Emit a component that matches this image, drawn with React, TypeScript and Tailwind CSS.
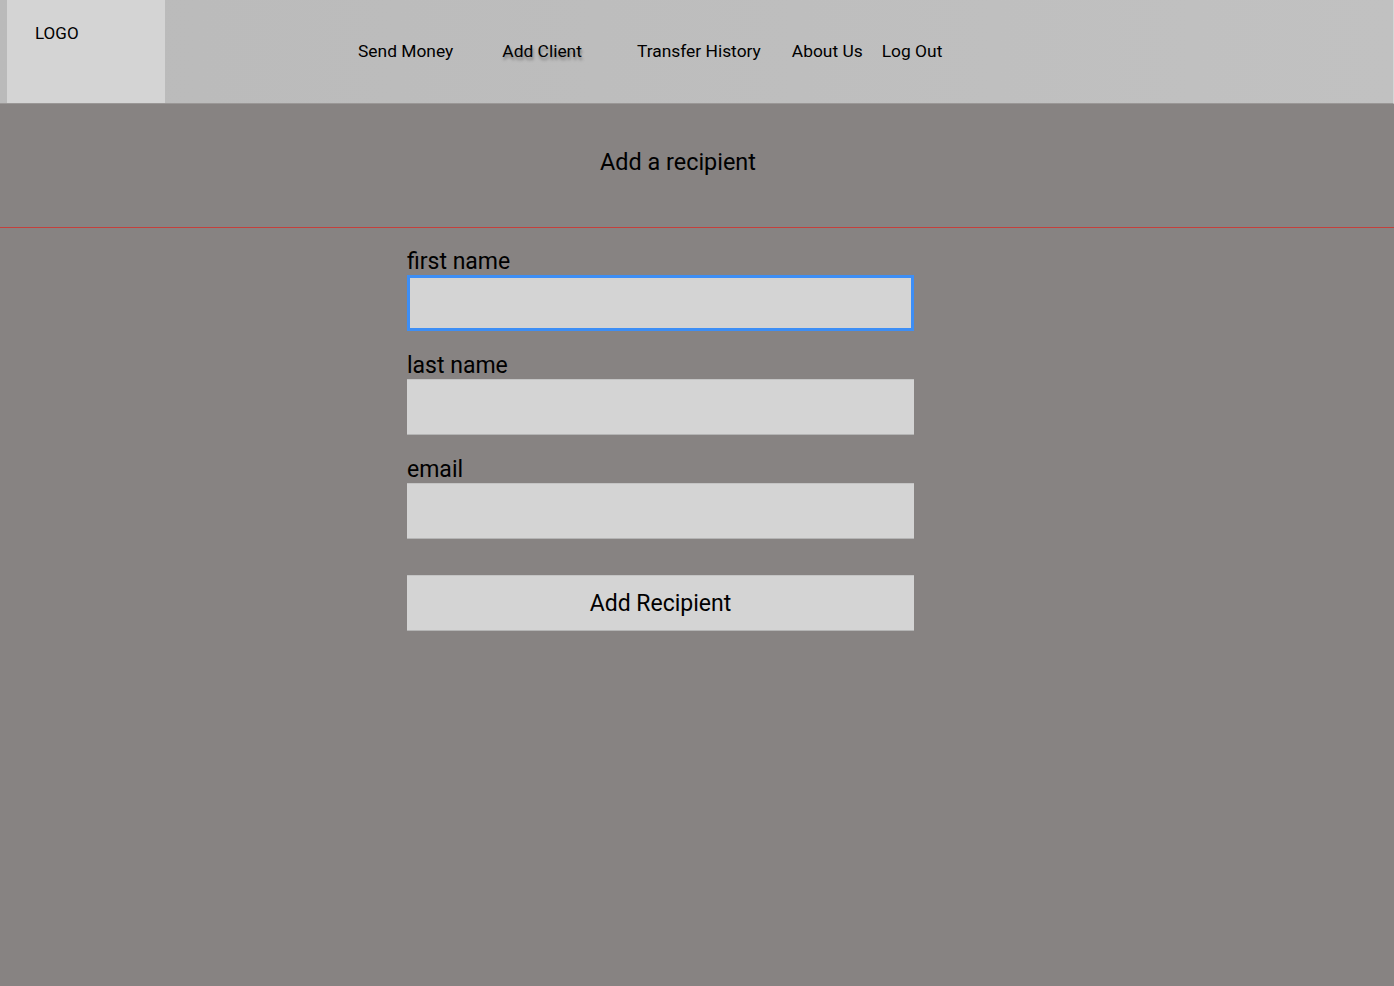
const navItems = [
  { label: "Send Money", className: "ml-[193px]" },
  { label: "Add Client", className: "ml-[49px] [text-shadow:1px_3px_3px_rgba(0,0,0,0.35)]" },
  { label: "Transfer History", className: "ml-[55px]" },
  { label: "About Us", className: "ml-[31px]" },
  { label: "Log Out", className: "ml-[19px]" },
];

function Field({ label, focused }: { label: string; focused?: boolean }) {
  return (
    <label className="flex flex-col">
      <span className="pt-px text-[23px] leading-[25px] text-black">{label}</span>
      <input
        className={
          "mt-px h-[56px] w-full bg-[#d4d4d4] outline-none " +
          (focused ? "border-[3px] border-[#3d8ef5]" : "border-y border-t-[#c4c4c4] border-b-[#b4b4b4]")
        }
        autoFocus={focused}
      />
    </label>
  );
}

export default function App() {
  return (
    <div className="min-h-[986px] bg-[#878382] font-['Roboto',sans-serif] text-black">
      <header className="flex h-[104px] border-b border-[#9a9796] bg-gradient-to-r from-[#bababa] to-[#c1c1c1] pl-[7px] border-r border-r-[#d6d6d6]">
        <div className="h-full w-[158px] bg-[#d4d4d4] pl-[28px] pt-[23px] text-[17px] leading-[21px]">LOGO</div>
        <nav className="flex items-center text-[17.4px]">
          {navItems.map((item) => (
            <a key={item.label} className={item.className} href="#">
              {item.label}
            </a>
          ))}
        </nav>
      </header>
      <section className="flex h-[124px] justify-center border-b border-[#c4403c] pr-[38px] pt-[43px]">
        <h1 className="text-[23.4px] leading-[30px]">Add a recipient</h1>
      </section>
      <form className="ml-[407px] flex w-[507px] flex-col gap-[21px] pt-[20px]" onSubmit={(e) => e.preventDefault()}>
        <Field label="first name" focused />
        <Field label="last name" />
        <Field label="email" />
        <button
          type="submit"
          className="mt-[15px] h-[56px] border-y border-t-[#c4c4c4] border-b-[#b4b4b4] bg-[#d4d4d4] pt-[3px] text-[23px]"
        >
          Add Recipient
        </button>
      </form>
    </div>
  );
}
